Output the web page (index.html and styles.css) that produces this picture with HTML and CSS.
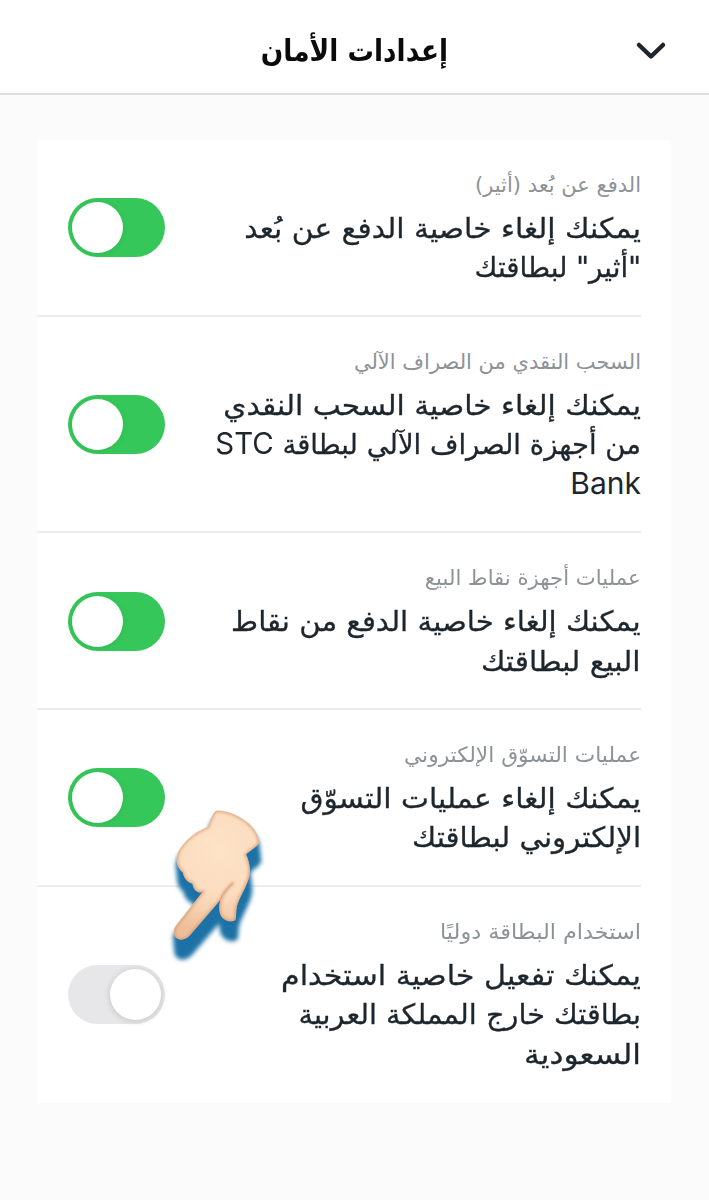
FILE: index.html
```
<!DOCTYPE html>
<html lang="ar" dir="rtl">
  <head>
    <meta charset="utf-8">
    <meta name="viewport" content="width=device-width, initial-scale=1.0">
    <title>إعدادات الأمان</title>
    <link rel="stylesheet" href="styles.css">
  </head>
  <body>
    <header class="header">
      <svg class="chevron" width="32" height="20" viewBox="0 0 32 20">
        <path d="M4 4 L16 15.5 L28 4" />
      </svg>
      <h1>إعدادات الأمان</h1>
    </header>

    <main class="card">
      <section class="row contactless">
        <div class="text">
          <h2>الدفع عن بُعد (أثير)</h2>
          <p>يمكنك إلغاء خاصية الدفع عن بُعد</p>
          <p>"أثير" لبطاقتك</p>
        </div>
        <div class="toggle on"></div>
      </section>
      <section class="row atm">
        <div class="text">
          <h2>السحب النقدي من الصراف الآلي</h2>
          <p>يمكنك إلغاء خاصية السحب النقدي</p>
          <p>من أجهزة الصراف الآلي لبطاقة <span class="latin">STC</span></p>
          <p><span class="latin">Bank</span></p>
        </div>
        <div class="toggle on"></div>
      </section>
      <section class="row pos">
        <div class="text">
          <h2>عمليات أجهزة نقاط البيع</h2>
          <p>يمكنك إلغاء خاصية الدفع من نقاط</p>
          <p>البيع لبطاقتك</p>
        </div>
        <div class="toggle on"></div>
      </section>
      <section class="row online">
        <div class="text">
          <h2>عمليات التسوّق الإلكتروني</h2>
          <p>يمكنك إلغاء عمليات التسوّق</p>
          <p>الإلكتروني لبطاقتك</p>
        </div>
        <div class="toggle on"></div>
      </section>
      <section class="row abroad">
        <div class="text">
          <h2>استخدام البطاقة دوليًا</h2>
          <p>يمكنك تفعيل خاصية استخدام</p>
          <p>بطاقتك خارج المملكة العربية</p>
          <p>السعودية</p>
        </div>
        <div class="toggle"></div>
      </section>

      <!-- pointing hand -->
      <svg class="hand" width="140" height="190" viewBox="0 0 420 570">
        <defs>
          <radialGradient id="skin" gradientUnits="userSpaceOnUse" cx="205" cy="180" r="250">
            <stop offset="0" stop-color="#fde3c8" />
            <stop offset="0.55" stop-color="#fbdcbe" />
            <stop offset="1" stop-color="#efbf9a" />
          </radialGradient>
          <filter id="soft" x="-20%" y="-20%" width="140%" height="140%">
            <feGaussianBlur stdDeviation="7" />
          </filter>
          <filter id="edge" x="-20%" y="-20%" width="140%" height="140%">
            <feGaussianBlur stdDeviation="5" />
          </filter>
          <path id="shape" d="M198 62 C240 58 320 98 327 152 C329 162 322 166 316 171 L288 193 C298 215 302 238 298 257 C291 292 262 328 259 359 C258 372 259 382 256 389 C246 399 222 393 213 377 C206 364 207 345 211 330 L120 436 C106 451 87 453 77 442 C69 432 70 419 79 406 L157 307 C142 309 132 301 127 281 C113 278 103 267 98 247 C84 235 79 219 80 204 C84 175 120 131 172 112 C181 98 184 73 198 62 Z" />
          <clipPath id="inside"><use href="#shape" /></clipPath>
        </defs>
        <g filter="url(#soft)" fill="#1d72a6" stroke="#1d72a6" stroke-width="6">
          <use href="#shape" x="0" y="18" />
          <use href="#shape" x="2" y="38" />
          <use href="#shape" x="4" y="57" />
        </g>
        <use href="#shape" fill="url(#skin)" />
        <g clip-path="url(#inside)" fill="none">
          <use href="#shape" stroke="#d4926a" stroke-width="8" opacity="0.8" filter="url(#edge)" />
          <path d="M211 330 C220 309 233 294 250 278" stroke="#c9855c" stroke-width="5" filter="url(#edge)" />
          <path d="M211 330 C219 309 232 294 249 279" stroke="#d9a078" stroke-width="2" />
        </g>
      </svg>
    </main>
  </body>
</html>
```

FILE: styles.css
```
body {
  margin: 0;
  min-height: 1200px;
  background: #fbfbfb;
  font-family: "DejaVu Sans", sans-serif;
  color: #1d252d;
}

.header {
  position: relative;
  height: 93px;
  background: #fff;
  border-bottom: 2px solid #dfdfdf;
  display: flex;
  align-items: center;
  justify-content: center;
}

.header h1 {
  margin: 0;
  padding-top: 8px;
  font-size: 30px;
  color: #0b0b0b;
  transform: scaleX(0.88);
}

.chevron {
  position: absolute;
  right: 42px;
  top: 41px;
}

.chevron path {
  fill: none;
  stroke: #1d252d;
  stroke-width: 4.5;
  stroke-linecap: round;
  stroke-linejoin: round;
}

.card {
  position: relative;
  width: 634px;
  height: 963px;
  margin: 45px 38px 0 auto;
  background: #fff;
}

.row {
  box-sizing: border-box;
  margin-right: 30px;
  padding: 27px 0 27.1px 31px;
  display: flex;
  align-items: center;
  justify-content: space-between;
  border-bottom: 2px solid #ececee;
}

.row:last-of-type {
  border-bottom: none;
}

.text h2 {
  margin: 0 0 6px;
  font-size: 21px;
  font-weight: normal;
  line-height: 36px;
  white-space: nowrap;
  color: #8d9297;
  transform-origin: right;
}

.text p {
  margin: 0;
  height: 39.4px;
  font-size: 28px;
  line-height: 39.4px;
  white-space: nowrap;
  -webkit-text-stroke: 0.3px #1d252d;
  transform-origin: right;
}

/* line widths */
.contactless p:nth-of-type(1) { transform: scaleX(1.061); }
.contactless p:nth-of-type(2) { transform: scaleX(0.99); }
.atm p:nth-of-type(1) { transform: scaleX(1.06); }
.atm p:nth-of-type(2) { transform: scaleX(0.981); }
.pos h2 { transform: scaleX(1.01); }
.pos p:nth-of-type(1) { transform: scaleX(1.043); }
.pos p:nth-of-type(2) { transform: scaleX(1.058); }
.online h2 { transform: scaleX(1.035); }
.online p:nth-of-type(1) { transform: scaleX(1.061); }
.online p:nth-of-type(2) { transform: scaleX(1.046); }
.abroad h2 { transform: scaleX(1.065); }
.abroad p:nth-of-type(1) { transform: scaleX(1.078); }
.abroad p:nth-of-type(2) { transform: scaleX(1.026); }
.abroad p:nth-of-type(3) { transform: scaleX(1.12); }

.latin {
  font-family: Inter, sans-serif;
  font-size: 30px;
  line-height: 1;
  -webkit-text-stroke: 0;
}

.toggle {
  flex: none;
  box-sizing: border-box;
  width: 97px;
  height: 59px;
  margin-top: 1px;
  padding: 4px;
  border-radius: 30px;
  background: #e7e7e9;
  display: flex;
  justify-content: flex-start;
}

.toggle::before {
  content: "";
  width: 51px;
  height: 51px;
  border-radius: 50%;
  background: #fff;
  box-shadow: 0 1px 7px rgba(0, 0, 0, 0.16);
}

.toggle.on {
  background: #35c759;
  justify-content: flex-end;
}

.toggle.on::before {
  box-shadow: 0 1px 6px rgba(0, 0, 0, 0.07);
}

.hand {
  position: absolute;
  left: 113px;
  top: 650px;
}
```
